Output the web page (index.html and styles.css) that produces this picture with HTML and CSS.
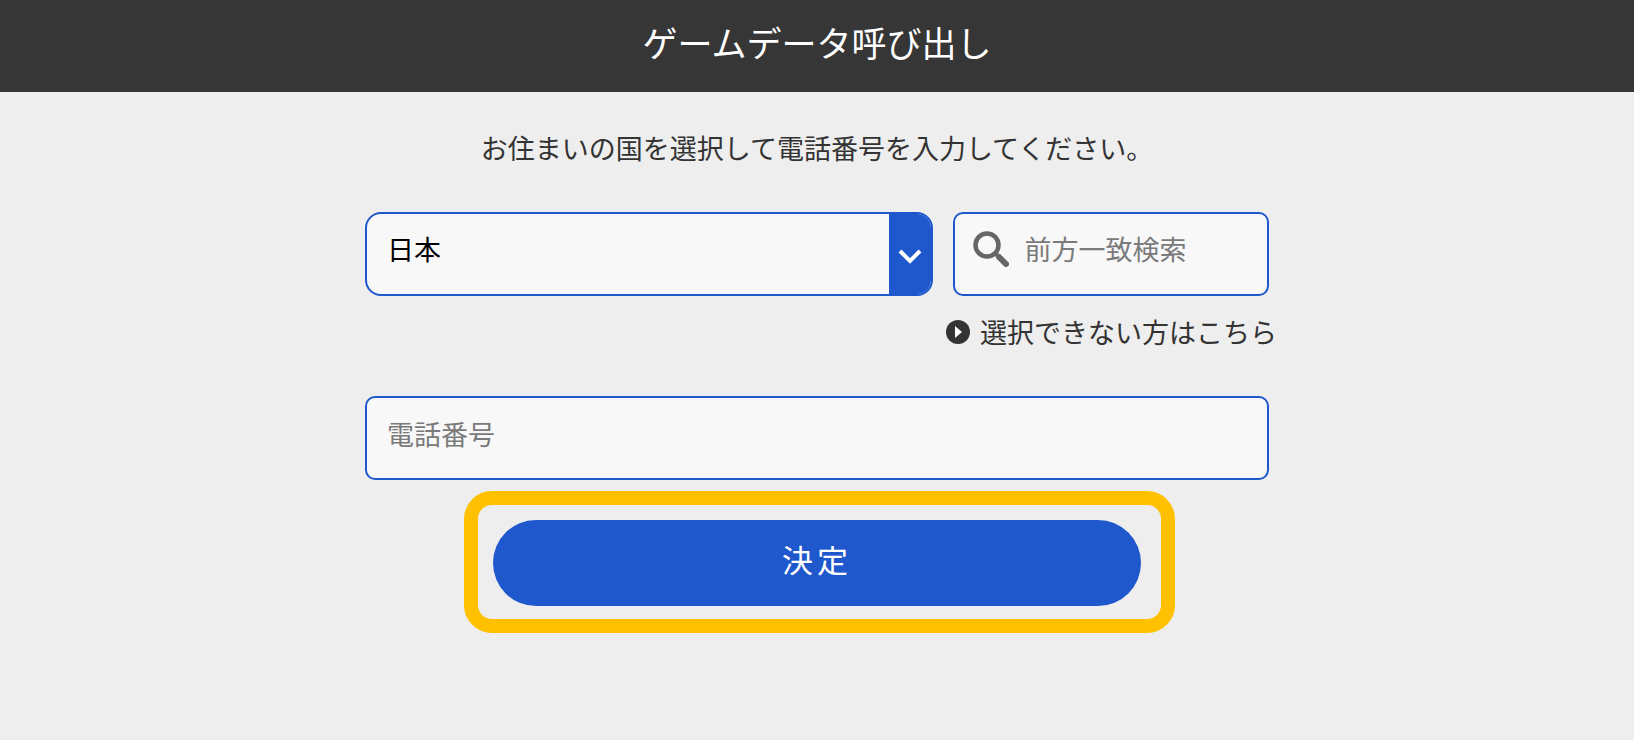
FILE: index.html
```html
<!DOCTYPE html>
<html lang="ja">
<head>
<meta charset="UTF-8">
<title>ゲームデータ呼び出し</title>
<meta name="viewport" content="width=device-width, initial-scale=1.0">
<link rel="stylesheet" href="styles.css">
</head>
<body>
  <header>
    <h1>ゲームデータ呼び出し</h1>
  </header>

  <main class="container">
    <p class="lead">お住まいの国を選択して電話番号を入力してください。</p>
    <form>
      <div class="country-row">
        <div class="select-box">
          <select id="country" aria-label="国">
            <option selected>日本</option>
          </select>
          <span class="select-arrow">
            <svg width="24" height="16" viewBox="0 0 24 16"><path d="M2 3l10 10 10-10" fill="none" stroke="#fff" stroke-width="4"/></svg>
          </span>
        </div>
        <label class="field search-box">
          <svg width="36" height="36" viewBox="0 0 36 36" fill="none" stroke="#666" aria-hidden="true">
            <circle cx="14" cy="14" r="11.5" stroke-width="4.5"/>
            <path d="M22 22l4 4" stroke-width="4"/>
            <path d="M26 26l7 7" stroke-width="6" stroke-linecap="round"/>
          </svg>
          <input type="text" aria-label="前方一致検索" placeholder="前方一致検索">
        </label>
      </div>
      <a class="help-link" href="#">
        <svg width="24" height="24" viewBox="0 0 24 24" aria-hidden="true">
          <circle cx="12" cy="12" r="12" fill="#333"/>
          <path d="M9 6l7 6-7 6z" fill="#fff"/>
        </svg>
        選択できない方はこちら
      </a>
      <input class="field phone" type="tel" aria-label="電話番号" placeholder="電話番号">
      <div class="submit-box">
        <button type="submit">決定</button>
      </div>
    </form>
  </main>
</body>
</html>
```

FILE: styles.css
```css
* {
  box-sizing: border-box;
}
body {
  font-family: "Noto Sans CJK JP", sans-serif;
  font-size: 27px;
  line-height: 40px;
  background: #eee;
  color: #333;
  margin: 0;
}
header {
  background: #363636;
  color: #fff;
  padding: 16px 20px 24px;
  text-align: center;
}
h1 {
  font-size: 35px;
  font-weight: 400;
  line-height: 52px;
  margin: 0;
}
.container {
  max-width: 944px;
  margin: 0 auto;
  padding: 36px 20px;
}
.lead {
  text-align: center;
  margin: 0 0 44px;
}
form {
  display: flex;
  flex-direction: column;
}
input,
select,
button {
  font: inherit;
}
.country-row {
  display: flex;
  gap: 20px;
}
.select-box {
  flex: 1;
  min-width: 0;
  display: flex;
  height: 84px;
  border: 2px solid #1f57cc;
  border-radius: 16px;
  background: #f8f8f8;
  overflow: hidden;
}
select {
  flex: 1;
  min-width: 0;
  appearance: none;
  border: none;
  background: none;
  color: #000;
  padding: 0 20px 10px;
}
.select-arrow {
  display: flex;
  align-items: center;
  justify-content: center;
  width: 42px;
  padding-top: 4px;
  background: #1f57cc;
}
.field {
  height: 84px;
  border: 2px solid #1f57cc;
  border-radius: 10px;
  background: #f8f8f8;
  padding: 0 20px 10px;
}
.search-box {
  flex: 0 0 35%;
  min-width: 0;
  display: flex;
  align-items: center;
  gap: 16px;
  padding-left: 18px;
}
.search-box svg {
  flex-shrink: 0;
}
.search-box input {
  flex: 1;
  min-width: 0;
  border: none;
  background: none;
  padding: 0;
}
::placeholder {
  color: #7a7a7a;
  opacity: 1;
}
.help-link {
  display: flex;
  align-items: center;
  align-self: flex-end;
  gap: 10px;
  margin: 16px -8px 44px 0;
  color: #333;
  text-decoration: none;
}
.phone {
  width: 100%;
}
.submit-box {
  position: relative;
  width: 72%;
  max-width: 648px;
  margin: 40px auto 0;
}
/* highlight frame around the button */
.submit-box::after {
  content: "";
  position: absolute;
  inset: -29px -34px -27px -29px;
  border: 14px solid #ffc000;
  border-radius: 28px;
  pointer-events: none;
}
button {
  display: block;
  width: 100%;
  height: 86px;
  border: none;
  border-radius: 44px;
  background: #1f57cc;
  color: #fff;
  font-size: 31px;
  font-weight: 400;
  letter-spacing: 4px;
  padding: 0 0 8px;
  cursor: pointer;
}
```
